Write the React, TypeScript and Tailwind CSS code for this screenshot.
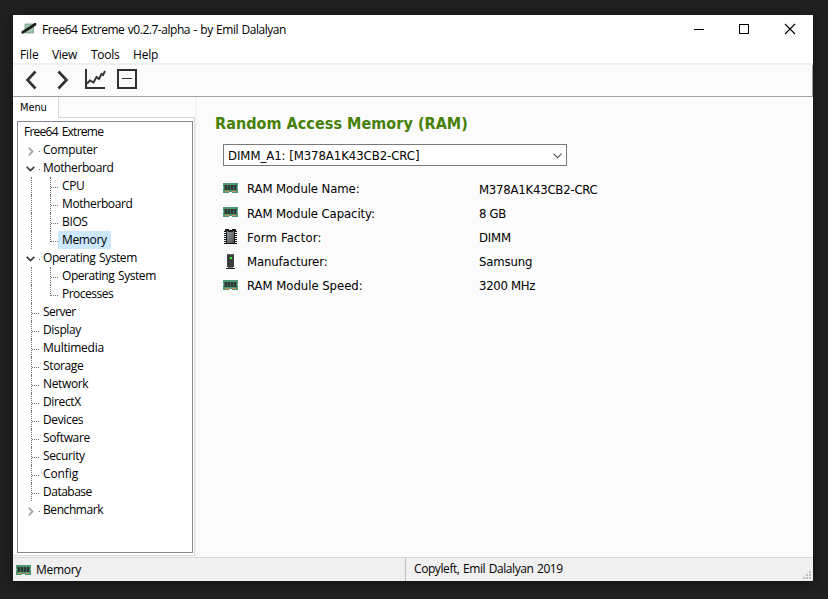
import React from "react";

const ui = "font-['Open_Sans','Noto_Sans',sans-serif]";
const tahoma = "font-['DejaVu_Sans_Condensed','DejaVu_Sans',sans-serif]";

function RamIcon() {
  return (
    <svg width="15" height="10" viewBox="0 0 15 10" shapeRendering="crispEdges" className="block shrink-0">
      <path d="M0 0h15v10H9V9H6v1H0z" fill="#4c9873" />
      <path d="M1 2h13v5H1z" fill="#3f6f59" />
      <path d="M2 2h2v5H2zM5 2h2v5H5zM8 2h2v5H8zM11 2h2v5h-2z" fill="#303534" />
      <path d="M0 4h1v1H0zM14 4h1v1h-1z" fill="#b5d3c4" />
      <path d="M2 8h4v1H2zM9 8h4v1H9z" fill="#d98d55" />
    </svg>
  );
}

function ChipIcon() {
  return (
    <svg width="15" height="16" viewBox="0 0 15 16" className="block shrink-0">
      <defs>
        <linearGradient id="chip" x1="0" y1="0" x2="1" y2="1">
          <stop offset="0" stopColor="#97999b" />
          <stop offset="1" stopColor="#4c5053" />
        </linearGradient>
      </defs>
      {[2, 4, 6, 8, 10, 12, 14].map((y) => (
        <path key={y} d={`M1 ${y}h2v1H1zM12 ${y}h2v1h-2z`} fill="#111" />
      ))}
      <path d="M2 0h4v1h3V0h4v2h-1v13H3V2H2z" fill="#17191b" />
      <path d="M4 2h1v1h5V2h1v12H4z" fill="url(#chip)" />
    </svg>
  );
}

function TowerIcon() {
  return (
    <svg width="15" height="16" viewBox="0 0 15 16" shapeRendering="crispEdges" className="block shrink-0">
      <path d="M4 0h7v13H4z" fill="#3c3f3e" />
      <path d="M4 0h7v1H4z" fill="#666" />
      <path d="M5 13h5v1H5z" fill="#777" />
      <path d="M3 14h9v1H3z" fill="#222" />
      <path d="M7 3h2v2H7z" fill="#35ff35" />
    </svg>
  );
}

function Expander({ open }: { open?: boolean }) {
  return open ? (
    <svg width="9" height="6" viewBox="0 0 9 6" className="block" fill="none" stroke="#404040" strokeWidth="1.8">
      <path d="M.7.8 4.5 4.6 8.3.8" />
    </svg>
  ) : (
    <svg width="6" height="9" viewBox="0 0 6 9" className="mr-px block" fill="none" stroke="#a6a6a6" strokeWidth="1.8">
      <path d="M.8.7 4.6 4.5.8 8.3" />
    </svg>
  );
}

type Node = { label: string; level: 1 | 2; state?: "open" | "closed"; last?: boolean; selected?: boolean; tracking?: string };

const nodes: Node[] = [
  { label: "Computer", level: 1, state: "closed", tracking: "tracking-[-0.25px]" },
  { label: "Motherboard", level: 1, state: "open", tracking: "tracking-[-0.4px]" },
  { label: "CPU", level: 2, tracking: "tracking-[-0.4px]" },
  { label: "Motherboard", level: 2, tracking: "tracking-[-0.4px]" },
  { label: "BIOS", level: 2 },
  { label: "Memory", level: 2, last: true, selected: true, tracking: "tracking-[-0.36px]" },
  { label: "Operating System", level: 1, state: "open", tracking: "tracking-[-0.43px] [word-spacing:1px]" },
  { label: "Operating System", level: 2, tracking: "tracking-[-0.43px] [word-spacing:1px]" },
  { label: "Processes", level: 2, last: true, tracking: "tracking-[-0.5px]" },
  { label: "Server", level: 1, tracking: "tracking-[-0.55px]" },
  { label: "Display", level: 1 },
  { label: "Multimedia", level: 1, tracking: "tracking-[-0.25px]" },
  { label: "Storage", level: 1 },
  { label: "Network", level: 1 },
  { label: "DirectX", level: 1 },
  { label: "Devices", level: 1 },
  { label: "Software", level: 1 },
  { label: "Security", level: 1 },
  { label: "Config", level: 1, tracking: "tracking-[-0.1px]" },
  { label: "Database", level: 1, tracking: "tracking-[-0.5px]" },
  { label: "Benchmark", level: 1, state: "closed", tracking: "tracking-[-0.42px]" },
];

function TreeRow({ node }: { node: Node }) {
  const { label, level, state, last, selected, tracking } = node;
  return (
    <div className="flex h-[18px]">
      {state ? (
        <div className="flex w-[21px] items-center pr-[4px] pt-[2px]">
          <div className="flex w-[17px] items-center justify-end">
            <Expander open={state === "open"} />
          </div>
        </div>
      ) : (
        <div className="flex w-[21px] pl-[13px]">
          <div className="w-[8px] border-l border-dotted border-[#707070]">
            {level === 1 && <div className="mt-[10px] border-t border-dotted border-[#707070]" />}
          </div>
        </div>
      )}
      {state && <div className="mt-[10px] size-px bg-[#707070]" />}
      {level === 2 && (
        <div className="flex w-[19px] pl-[11px]">
          <div className={`w-[9px] border-l border-dotted border-[#707070] ${last ? "h-[11px]" : "h-[18px]"}`}>
            <div className="mt-[10px] border-t border-dotted border-[#707070]" />
          </div>
        </div>
      )}
      <div
        className={`h-[18px] whitespace-nowrap leading-[18px] ${tracking ?? "tracking-[-0.36px]"} ${
          state ? "pl-[3px]" : "pl-[4px]"
        } ${selected ? "w-[53px] bg-[#cce8ff]" : ""}`}
      >
        {label}
      </div>
    </div>
  );
}

const specs = [
  { icon: <RamIcon />, it: "mt-[7px]", label: "RAM Module Name:", value: "M378A1K43CB2-CRC", lt: "tracking-[-0.1px] mt-px", vt: "tracking-[-0.22px] mt-[2px]" },
  { icon: <RamIcon />, it: "mt-[7px]", label: "RAM Module Capacity:", value: "8 GB", lt: "tracking-[-0.1px] mt-[2px]", vt: "tracking-[-0.3px] mt-[2px]" },
  { icon: <ChipIcon />, it: "mt-[5px]", label: "Form Factor:", value: "DIMM", lt: "tracking-[0.18px] mt-[2px]", vt: "tracking-[-0.2px] mt-[2px]" },
  { icon: <TowerIcon />, it: "mt-[6px]", label: "Manufacturer:", value: "Samsung", lt: "tracking-[-0.12px] mt-[2px]", vt: "tracking-[-0.15px] mt-[2px]" },
  { icon: <RamIcon />, it: "mt-[8px]", label: "RAM Module Speed:", value: "3200 MHz", lt: "tracking-[-0.04px] mt-[2px]", vt: "tracking-[-0.3px] mt-[2px]" },
];

export default function App() {
  return (
    <div className={`h-[599px] w-[828px] overflow-hidden bg-[#202020] pl-[13px] pt-[15px] text-[12px] text-black ${ui}`}>
      <div className="flex h-[566px] w-[800px] flex-col bg-[#fbfbfb] shadow-[0_2px_9px_rgba(0,0,0,0.45)]">
        <div className="flex h-[30px] items-center bg-white">
          <svg width="16" height="14" viewBox="0 0 16 14" className="mb-[2px] ml-[8px] block">
            <path d="M4 2h8.500v9H4z" fill="#9cc7ad" stroke="#6e9a80" strokeWidth=".8" />
            <path d="M.5 9.500 13.500 1l1.800 0 0 2.200L2.500 11.500.500 11.800z" fill="#1c1e1d" />
          </svg>
          <span className="ml-[5px] whitespace-nowrap tracking-[-0.47px] [word-spacing:0.8px]">Free64 Extreme v0.2.7-alpha - by Emil Dalalyan</span>
          <svg width="102" height="12" viewBox="0 0 102 12" fill="none" stroke="#000" className="mb-[2px] ml-auto mr-[17px] block">
            <path d="M0 6.500h10" shapeRendering="crispEdges" />
            <path d="M45.500 1.500h9v9h-9z" shapeRendering="crispEdges" />
            <path d="m91 1 10 10M101 1 91 11" strokeWidth="1.100" />
          </svg>
        </div>
        <div className="flex h-[20px] border-b-2 border-[#f0f0f0] bg-white leading-[20px]">
          <span className="ml-[7px] w-[32px] tracking-[-0.1px]">File</span>
          <span className="w-[39px] tracking-[-0.3px]">View</span>
          <span className="w-[42px] tracking-[-0.3px]">Tools</span>
          <span className="tracking-[-0.2px]">Help</span>
        </div>
        <div className="flex h-[32px] border-b border-r border-[#a0a0a0] pl-[12px] pt-[4px]">
          <svg width="114" height="22" viewBox="0 0 114 22" fill="none" stroke="#2f3133" className="block">
            <path d="m10.500 2.500-8 8.500 8 8.500M33.500 2.500l8 8.500-8 8.500" strokeWidth="2.600" />
            <path d="M61 0v19h19" strokeWidth="2" />
            <path d="m62 14.500 3-3 3.500 2 3-5.500 2.500 2 2.500-5 1.500 1 2-4" strokeWidth="1.900" />
            <path d="M93 1h18v18H93z" strokeWidth="2" />
            <path d="M97 9.500h10" strokeWidth="1" />
          </svg>
        </div>
        <div className="flex h-[460px]">
          <div className="flex w-[184px] flex-col border-r-2 border-[#f4f4f4]">
            <div className="flex h-[21px]">
              <div className={`w-[46px] border-r border-[#d9d9d9] bg-white pl-[7px] text-[11px] leading-[21px] tracking-[-0.1px] ${tahoma}`}>Menu</div>
              <div className="flex-1 border-b border-[#d9d9d9]" />
            </div>
            <div className="h-[438px] border-b border-r border-[#d9d9d9] bg-white pl-[4px] pt-[3px]">
              <div className="h-[432px] w-[176px] border border-[#828790] pt-px">
                <div className="h-[18px] whitespace-nowrap pl-[6px] leading-[18px] tracking-[-0.75px] [word-spacing:1.5px]">Free64 Extreme</div>
                {nodes.map((n, i) => (
                  <TreeRow key={i} node={n} />
                ))}
              </div>
            </div>
          </div>
          <div className={`flex flex-1 flex-col pl-[18px] ${tahoma}`}>
            <h1 className="mt-[15px] h-[24px] whitespace-nowrap text-[16px] font-bold leading-[24px] tracking-[0.05px] text-[#468006]">
              Random Access Memory (RAM)
            </h1>
            <div className="ml-[8px] mt-[8px] flex h-[22px] w-[344px] border border-[#7a7a7a] bg-white pl-[4px] pr-[4px] text-[13px]">
              <span className="whitespace-nowrap leading-[21px] tracking-[-0.05px]">DIMM_A1: [M378A1K43CB2-CRC]</span>
              <svg width="9" height="6" viewBox="0 0 9 6" className="ml-auto mt-[8px] block" fill="none" stroke="#505050" strokeWidth="1.100">
                <path d="M.5.700 4.500 4.700 8.500.700" />
              </svg>
            </div>
            <div className="mt-[10px] pl-[8px] text-[13px] leading-[24px]">
              {specs.map((s) => (
                <div key={s.label} className="flex h-[24px] items-start">
                  <div className={s.it}>{s.icon}</div>
                  <span className={`ml-[9px] w-[232px] whitespace-nowrap ${s.lt}`}>{s.label}</span>
                  <span className={`whitespace-nowrap ${s.vt}`}>{s.value}</span>
                </div>
              ))}
            </div>
          </div>
        </div>
        <div className="flex h-[24px] border-t border-[#d7d7d7] bg-[#f0f0f0]">
          <div className="flex w-[393px] items-center border-r border-[#bfbfbf] pl-[3px]">
            <RamIcon />
            <span className="ml-[5px] tracking-[-0.3px]">Memory</span>
          </div>
          <div className="flex flex-1 justify-between pl-[8px] leading-[22px]">
            <span className="whitespace-nowrap tracking-[-0.42px] [word-spacing:0.8px]">Copyleft, Emil Dalalyan 2019</span>
            <svg width="8" height="8" viewBox="0 0 8 8" fill="#bfbfbf" className="mr-[2px] mt-[13px] block" shapeRendering="crispEdges">
              <path d="M6 0h2v2H6zM3 3h2v2H3zM6 3h2v2H6zM0 6h2v2H0zM3 6h2v2H3zM6 6h2v2H6z" />
            </svg>
          </div>
        </div>
      </div>
    </div>
  );
}
